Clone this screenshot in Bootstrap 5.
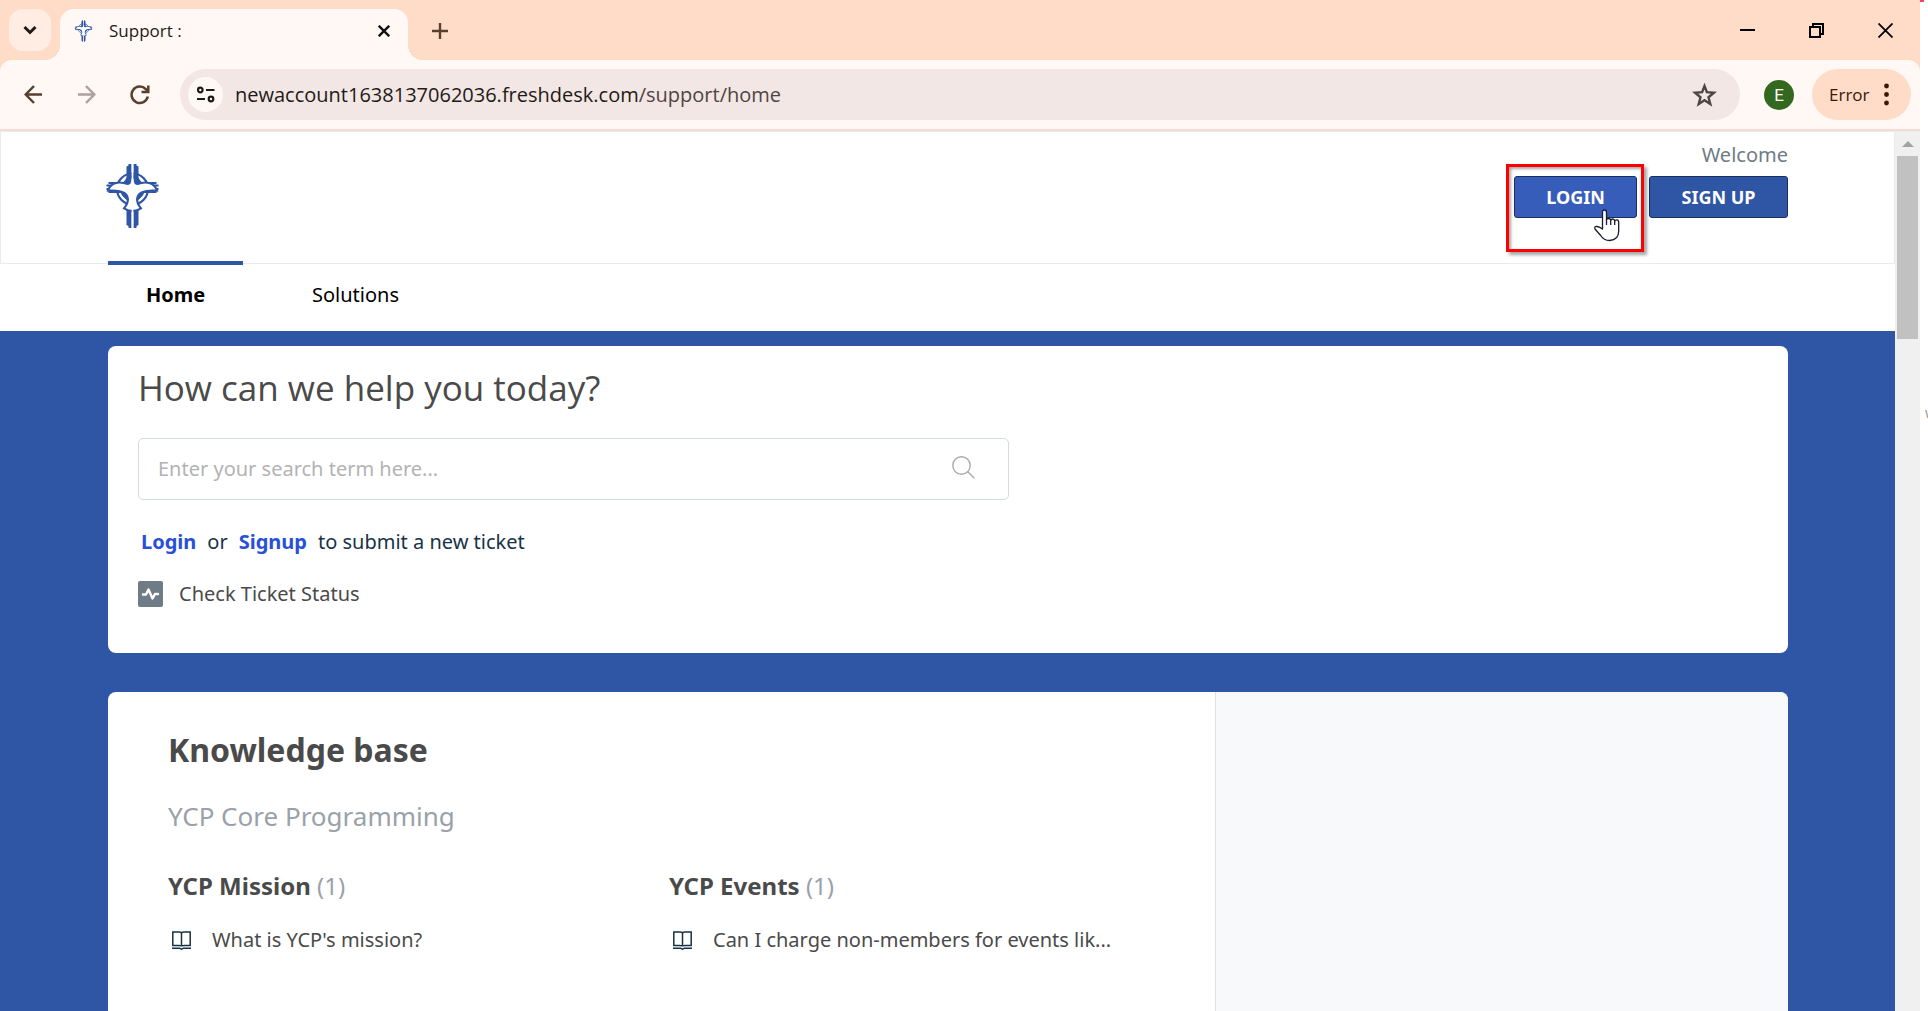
<!DOCTYPE html>
<html lang="en">
<head>
<meta charset="utf-8">
<meta name="viewport" content="width=device-width, initial-scale=1">
<title>Support :</title>
<link href="https://cdn.jsdelivr.net/npm/bootstrap@5.3.0/dist/css/bootstrap.min.css" rel="stylesheet">
<style>
  :root { --brand: #2f55a5; --peach: #ffdcc8; --cream: #fff8f5; --ink: #4a4a4a; --slate: #6f7c87; }
  body { font-family: "Noto Sans", "Open Sans", sans-serif; font-size: 20px; line-height: 30px; color: var(--ink); background: #fff; }
  svg { display: block; flex: none; }
  a { text-decoration: none; }
  .browser { height: 100vh; margin-right: 8px; }
  .chrome-ui { font-family: "Open Sans", "Noto Sans", sans-serif; }
  .chrome-ui button, .chrome-ui a { border: 0; background: none; padding: 0; color: inherit; }

  .tabstrip { background: var(--peach); height: 60px; padding: 9px 27px 0 9px; }
  .tab-menu { width: 42px; height: 42px; border-radius: 14px; background: #ffece2 !important; }
  .page-tab { position: relative; width: 348px; height: 51px; margin-left: 9px; padding: 0 18px 8px 14px; border-radius: 14px 14px 0 0; background: var(--cream); font-size: 17px; color: #1f1a17; }
  .page-tab::before, .page-tab::after { content: ""; position: absolute; bottom: 0; width: 15px; height: 15px; }
  .page-tab::before { left: -15px; background: radial-gradient(circle at 0 0, transparent 15px, var(--cream) 15px); }
  .page-tab::after { right: -15px; background: radial-gradient(circle at 100% 0, transparent 15px, var(--cream) 15px); }
  .window-buttons { gap: 54px; }

  .toolbar-wrap { background: var(--peach); }
  .toolbar { height: 69px; padding: 0 9px 0 24px; background: var(--cream); border-radius: 12px 12px 0 0; color: #57402f; }
  .chrome-edge { height: 3px; background: #f3dcd3; border-bottom: 1px solid #ebebeb; }
  .nav-icons { gap: 34px; width: 156px; }
  .omnibox { height: 51px; border-radius: 26px; background: #f2e7e4; padding: 0 23px 0 8px; }
  .site-info { width: 35px; height: 35px; border-radius: 50%; background: var(--cream) !important; }
  .url-text { font-size: 20px; color: #4f4542; }
  .url-text b { font-weight: 400; color: #1f1a17; }
  .avatar { width: 30px; height: 30px; border-radius: 50%; background: #33691e !important; color: #fff !important; font: 400 17px/30px Roboto, sans-serif; margin: 0 18px 0 24px; }
  .error-pill { width: 99px; height: 51px; border-radius: 26px; background: var(--peach) !important; color: #3a1806 !important; font-size: 17px; padding: 0 22px 0 17px !important; }

  .page-scroll { width: 25px; background: #f0f0f0; }
  .page-thumb { width: 21px; height: 183px; background: #c1c1c1; }
  .page-arrow { width: 0; height: 0; margin: 9px 0; border: 6px solid transparent; border-top: 0; border-bottom: 6px solid #a3a3a3; }

  .gutter { padding-left: 108px; padding-right: 107px; }
  .site-header { height: 132px; border: 1px solid #ebebeb; border-top: 0; padding-left: 105px; padding-right: 106px; }
  .site-logo { margin-top: 31px; }
  .welcome { color: var(--slate); margin-top: 8px; margin-bottom: 6px; }
  .btn-portal { --bs-btn-color: #fff; --bs-btn-hover-color: #fff; --bs-btn-bg: var(--brand); --bs-btn-hover-bg: #375dbb; --bs-btn-border-color: #1b2e60; --bs-btn-hover-border-color: #1b2e60; --bs-btn-border-radius: 3px; height: 42px; padding: 0; font-size: 18px; line-height: 40px; font-weight: 700; width: 139px; }
  .btn-login { width: 123px; --bs-btn-bg: #375dbb; }
  .login-spot { position: relative; }
  .red-frame { position: absolute; left: -8px; top: -12px; width: 138px; height: 88px; border: 3px solid #f00; box-shadow: 3px 3px 3px rgba(0,0,0,.35), inset 2px 2px 3px rgba(0,0,0,.35); pointer-events: none; }
  .hand { position: absolute; left: 79px; top: 33px; }

  .site-nav { height: 70px; margin-top: -3px; }
  .site-nav a { display: block; width: 135px; padding-top: 15px; border-top: 4px solid transparent; color: #000; text-align: center; }
  .site-nav a.active { border-color: var(--brand); font-weight: 700; }
  .site-nav li + li a { width: 225px; }

  .portal { background: var(--brand); padding-top: 15px; }
  .panel { background: #fff; border-radius: 8px; }
  .help-panel { height: 307px; padding: 17px 30px; }
  .help-panel h1 { font-family: "Open Sans", "Noto Sans", sans-serif; font-size: 35px; line-height: 50px; font-weight: 400; margin: 0 0 25px; }
  .search-box { width: 871px; max-width: 100%; height: 62px; border: 1px solid #d4dce2; border-radius: 5px; padding: 0 33px 0 19px; }
  .search-box input { border: 0; outline: 0; background: none; color: var(--ink); padding: 0; }
  .search-box input::placeholder { color: #b3b3b3; opacity: 1; }
  .search-box svg { margin-bottom: 3px; }
  .submit-line { margin: 27px 0 22px 3px; color: #183247; gap: 11px; }
  .submit-line a { color: #2850d8; font-weight: 700; }
  .status-link { color: var(--ink); gap: 16px; }

  .kb-panel { margin-top: 39px; border-radius: 8px 8px 0 0; }
  .kb-main { width: 1107px; padding: 33px 0 0 60px; }
  .kb-side { background: #f8f9fb; border-left: 1px solid #dcdfe3; border-radius: 0 8px 0 0; }
  .kb-main h2 { font-size: 32px; line-height: 50px; font-weight: 700; margin: 0 0 24px; }
  .kb-main h3 { font-size: 26px; line-height: 34px; font-weight: 400; color: #9aa1a9; margin: 0 0 36px; }
  .kb-main h4 { font-size: 24px; line-height: 34px; font-weight: 700; margin: 0 0 22px; }
  .kb-main h4 span { font-weight: 400; color: #9aa1a9; }
  .kb-col { width: 501px; }
  .kb-col a { color: var(--ink); gap: 21px; padding-left: 4px; }
  .speck { position: absolute; top: 0; left: 100%; width: 4px; height: 2px; background: #ff3d6b; }
  .cut-text { position: absolute; top: 398px; left: 1925px; width: 3px; overflow: hidden; font-size: 14px; color: #999; }
</style>
</head>
<body class="overflow-hidden">
<div class="browser d-flex flex-column position-relative">
  <i class="speck"></i>

  <header class="chrome-ui">
    <div class="tabstrip d-flex">
      <button class="tab-menu d-flex align-items-center justify-content-center" aria-label="Search tabs">
        <svg width="14" height="10" viewBox="0 0 14 10" fill="none" stroke="#1f1a17" stroke-width="3"><path d="M1.500 2 7 7.500 12.500 2"/></svg>
      </button>
      <div class="page-tab d-flex align-items-center">
        <svg width="19" height="22" viewBox="0 0 52 66"><use href="#cross"/></svg>
        <span class="flex-grow-1 ms-3">Support :</span>
        <button aria-label="Close tab"><svg width="12" height="12" viewBox="0 0 12 12" stroke="#111" stroke-width="2.400"><path d="M.8.800 11.200 11.200M11.200.800.800 11.200"/></svg></button>
      </div>
      <button class="d-flex align-items-center ms-4 pb-2" aria-label="New tab"><svg width="16" height="16" viewBox="0 0 16 16" stroke="#57402f" stroke-width="2.400"><path d="M8 0v16M0 8h16"/></svg></button>
      <div class="window-buttons d-flex ms-auto align-items-center pb-2">
        <button aria-label="Minimize"><svg width="15" height="15" viewBox="0 0 15 15"><path d="M0 6h15v2H0z"/></svg></button>
        <button aria-label="Restore"><svg width="15" height="15" viewBox="0 0 15 15" fill="none" stroke="#000" stroke-width="2"><path d="M1 4h10v10H1zM4 4V1h10v10h-3"/></svg></button>
        <button aria-label="Close"><svg width="15" height="15" viewBox="0 0 15 15" stroke="#000" stroke-width="1.800"><path d="M.5.500l14 14M14.500.500l-14 14"/></svg></button>
      </div>
    </div>
    <div class="toolbar-wrap">
      <div class="toolbar d-flex align-items-center">
        <div class="nav-icons d-flex align-items-center">
          <button aria-label="Back"><svg width="19" height="19" viewBox="0 0 19 19" fill="none" stroke="#57402f" stroke-width="2.500"><path d="M18 9.500H2M10 1 1.700 9.500 10 18"/></svg></button>
          <button aria-label="Forward"><svg width="19" height="19" viewBox="0 0 19 19" fill="none" stroke="#ada19c" stroke-width="2.500"><path d="M1 9.500h16M9 1l8.300 8.500L9 18"/></svg></button>
          <button aria-label="Reload"><svg width="20" height="20" viewBox="0 0 20 20" fill="none" stroke="#57402f" stroke-width="2.500"><path d="M17.800 11.500A8.200 8.200 0 1 1 15.800 4.200L18 6.500"/><path d="M18.300.500V7H11.500"/></svg></button>
        </div>
        <div class="omnibox d-flex align-items-center flex-grow-1">
          <button class="site-info d-flex align-items-center justify-content-center" aria-label="Site information">
            <svg width="19" height="17" viewBox="0 0 19 17" fill="none" stroke="#1f1a17" stroke-width="2.200"><circle cx="4.300" cy="4" r="2.300"/><path d="M10 4h8.500M1 13h8"/><circle cx="15" cy="13" r="2.300"/></svg>
          </button>
          <span class="url-text ms-2 ps-1 flex-grow-1"><b>newaccount1638137062036.freshdesk.com</b>/support/home</span>
          <button aria-label="Bookmark"><svg width="25" height="24" viewBox="0 0 25 24" fill="none" stroke="#4f4542" stroke-width="2.400"><path d="M12.500 3l2.400 6.200 7 .6-5.400 4.400 1.800 6.800-5.800-3.800L6.700 21l1.800-6.800-5.400-4.400 7-.6z"/></svg></button>
        </div>
        <button class="avatar" aria-label="Profile">E</button>
        <button class="error-pill d-flex align-items-center justify-content-between">Error
          <svg width="5" height="23" viewBox="0 0 5 23" fill="#3a1806"><circle cx="2.500" cy="3" r="2.400"/><circle cx="2.500" cy="11.500" r="2.400"/><circle cx="2.500" cy="20" r="2.400"/></svg>
        </button>
      </div>
    </div>
    <div class="chrome-edge"></div>
  </header>

  <div class="d-flex flex-grow-1 overflow-hidden">
    <div class="d-flex flex-column flex-grow-1">
      <div class="site-header d-flex justify-content-between align-items-start">
        <a class="site-logo" href="#" aria-label="Home page">
          <svg width="53" height="66" viewBox="0 0 52 66">
            <g id="cross" fill="none" stroke="#2f55a5">
              <circle cx="26" cy="26" r="15.500" stroke-width="2.200"/>
              <path fill="#2f55a5" stroke="none" d="M20 3.500l2-1V1h3v22h-5zM32 3.500l-2-1V1h-3v22h5zM20 46h5v19h-3v-2l-2-1zM32 46h-5v19h3v-2l2-1z"/>
              <path fill="#2f55a5" stroke="none" d="M21 13v8h-7q4-2 7-8zM31 13v8h7q-4-2-7-8zM14 28q8 1 8 10-7-3-8-10zM38 28q-8 1-8 10 7-3 8-10z"/>
              <path stroke-width="2" d="M0 22.500h6M2 20h9M41 20h9M46 22.500h6M0 26h4M48 26h4M2 29h14M36 29h14"/>
              <path stroke="#fff" stroke-width="1.300" d="M15 33l4 4M37 33l-4 4M14 21l4-5M38 21l-4-5"/>
              <path fill="#fff" stroke-width="4" paint-order="stroke" d="M26 14Q27 15 27.500 19 28 22 31 22 40 19 45 22 48 24 49 26.500 40 26 36 28 30 30 29.500 36 29.500 41 33 45 29 47.500 26 46.500 23 47.500 19 45 22.500 41 22.500 36 22 30 16 28 12 26 3 26.500 4 24 7 22 12 19 21 22 24 22 24.500 19 25 15 26 14Z"/>
              <path stroke="#fff" stroke-width="1.600" d="M26 0v18M26 46v20"/>
            </g>
          </svg>
        </a>
        <div>
          <div class="welcome text-end">Welcome</div>
          <div class="d-flex">
            <div class="login-spot me-2">
              <button type="button" class="btn btn-portal btn-login">LOGIN</button>
              <div class="red-frame"></div>
              <svg class="hand" width="28" height="33" viewBox="0 0 28 33" fill="#fff" stroke="#1b1b2b" stroke-width="1.300" stroke-linejoin="round"><path d="M9.500 20V3.500Q9.500 1 11.500 1t2 2.500V11q0-1.500 2-1.500t2.200 2q.3-1.500 2-1.500t2 2q.3-1.200 2-1.200 2 0 2 2.700v8.500q0 9-9 9.500-6 0-9-5L2 20q-1-3 2-2.500 3 .5 5.500 2.500z"/><path fill="none" d="M13.500 11v5M17.700 11.500v4.500M21.700 12v4"/></svg>
            </div>
            <button type="button" class="btn btn-portal ms-1">SIGN UP</button>
          </div>
        </div>
      </div>

      <nav class="gutter" aria-label="Portal">
        <ul class="site-nav list-unstyled d-flex mb-0">
          <li><a class="active" href="#">Home</a></li>
          <li><a href="#">Solutions</a></li>
        </ul>
      </nav>

      <main class="portal gutter flex-grow-1 d-flex flex-column">
        <section class="panel help-panel">
          <h1>How can we help you today?</h1>
          <form class="search-box d-flex align-items-center">
            <input class="flex-grow-1" type="text" aria-label="Search" placeholder="Enter your search term here...">
            <svg width="23" height="23" viewBox="0 0 23 23" fill="none" stroke="#aaa" stroke-width="1.400"><circle cx="9.500" cy="9.500" r="8.700"/><path d="M15.800 15.800l6.500 6.500"/></svg>
          </form>
          <div class="submit-line d-flex"><a href="#">Login</a><span>or</span><a href="#">Signup</a><span>to submit a new ticket</span></div>
          <a class="status-link d-inline-flex align-items-center" href="#">
            <svg width="25" height="26" viewBox="0 0 25 26"><rect width="25" height="26" rx="2" fill="#6f7c87"/><path d="M5 13.500h3l2.500-5 4 9 2.500-4.500h3" fill="none" stroke="#fff" stroke-width="2.400" stroke-linejoin="round" stroke-linecap="round"/></svg>
            Check Ticket Status
          </a>
        </section>

        <section class="panel kb-panel d-flex flex-grow-1">
          <div class="kb-main">
            <h2>Knowledge base</h2>
            <h3>YCP Core Programming</h3>
            <div class="d-flex">
              <div class="kb-col">
                <h4>YCP Mission <span>(1)</span></h4>
                <a class="d-flex align-items-center" href="#"><svg width="19" height="19" viewBox="0 0 19 19" fill="none" stroke="#183247" stroke-width="1.500"><path id="book" d="M.8 1H7q2.500 0 2.500 1.500Q9.500 1 12 1h6.200v13.500H12q-2.500 0-2.500 1 0-1-2.500-1H.8zM9.500 2.500v13M0 17.200h7.500l2 1 2-1H19"/></svg>What is YCP's mission?</a>
              </div>
              <div class="kb-col">
                <h4>YCP Events <span>(1)</span></h4>
                <a class="d-flex align-items-center" href="#"><svg width="19" height="19" viewBox="0 0 19 19" fill="none" stroke="#183247" stroke-width="1.500"><use href="#book"/></svg>Can I charge non-members for events lik...</a>
              </div>
            </div>
          </div>
          <aside class="kb-side flex-grow-1"></aside>
        </section>
      </main>
    </div>
    <div class="page-scroll d-flex flex-column align-items-center">
      <div class="page-arrow"></div>
      <div class="page-thumb"></div>
    </div>
  </div>
</div>
<span class="cut-text">w</span>
<script src="https://cdn.jsdelivr.net/npm/bootstrap@5.3.0/dist/js/bootstrap.bundle.min.js"></script>
</body>
</html>
